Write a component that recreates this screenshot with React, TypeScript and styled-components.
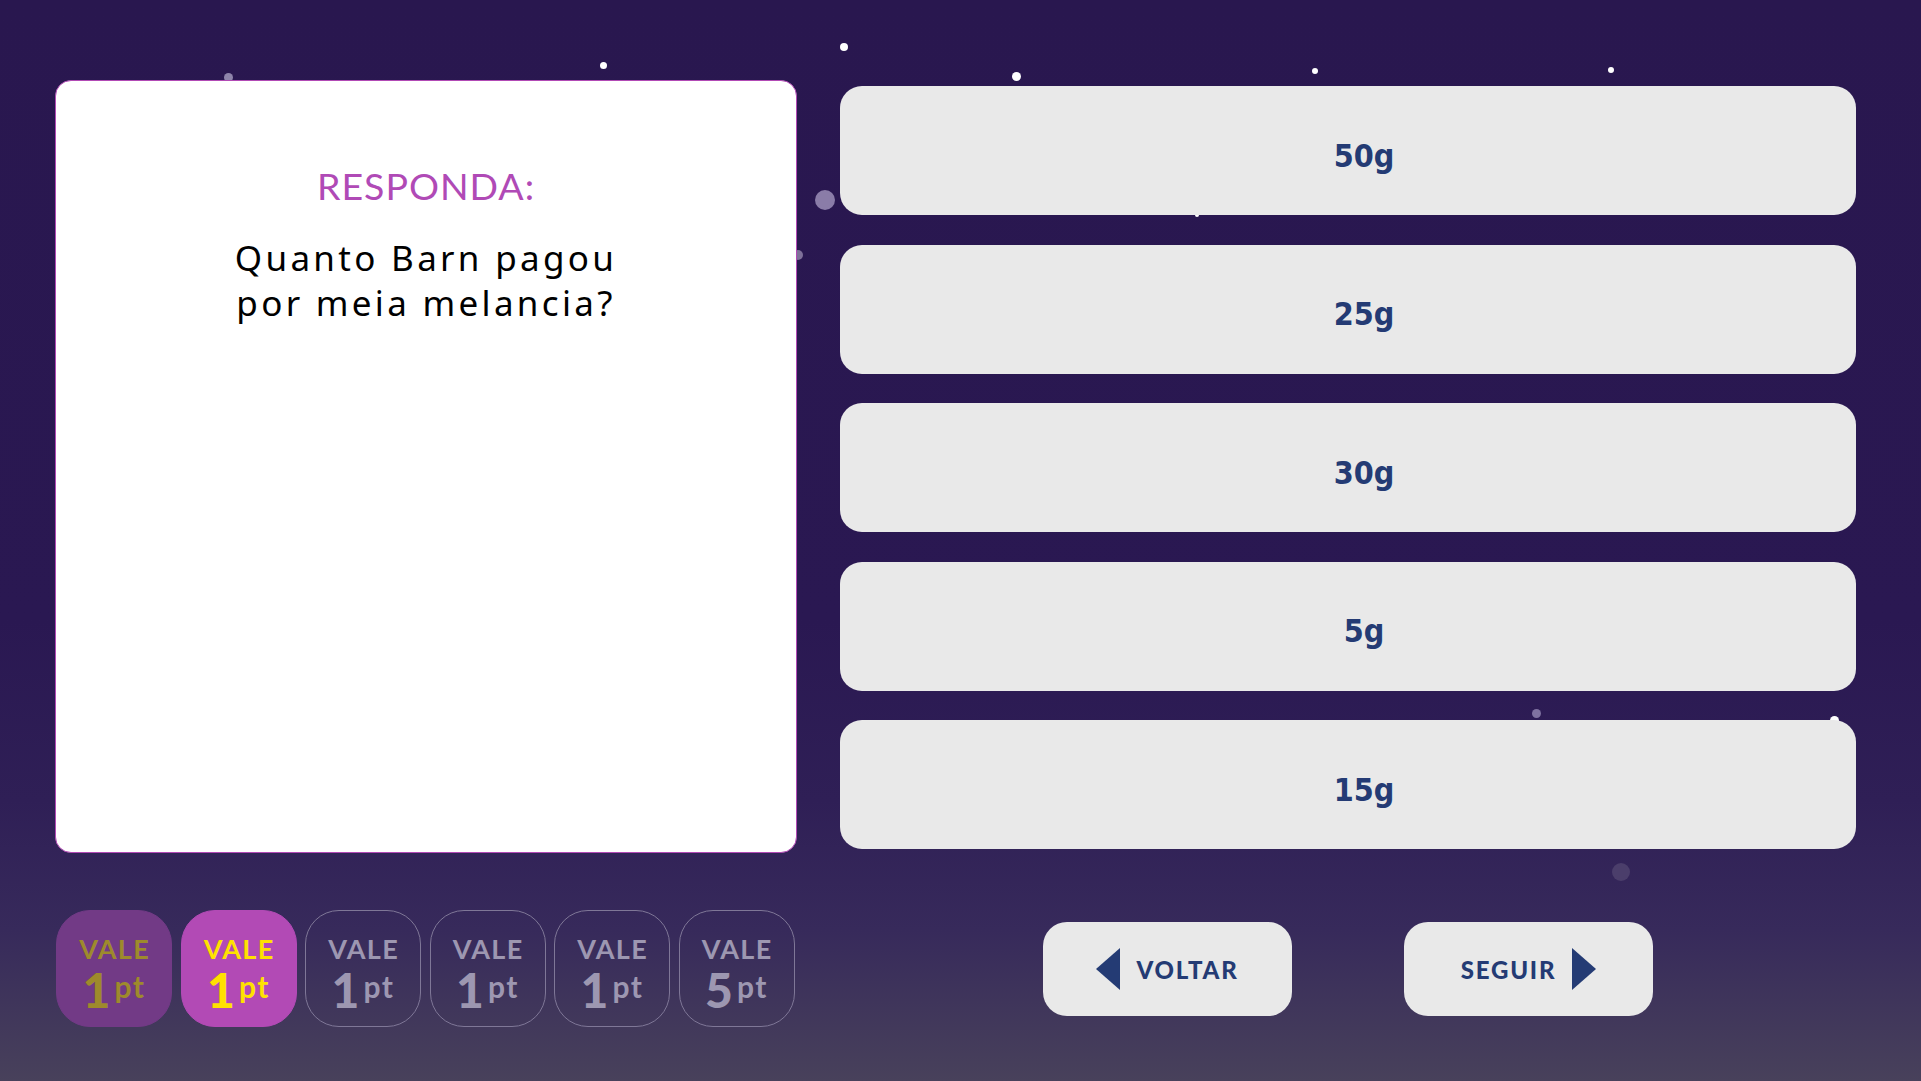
import React from "react";
import styled, { createGlobalStyle, css } from "styled-components";

const GlobalStyle = createGlobalStyle`
  html, body {
    margin: 0;
    padding: 0;
    width: 100%;
    height: 100%;
  }
  body {
    overflow: hidden;
    font-family: "Lato", "Noto Sans", sans-serif;
  }
  #root {
    width: 100%;
    height: 100%;
  }
  * { box-sizing: border-box; }
`;

const Stage = styled.main`
  position: relative;
  width: 100%;
  height: 1081px;
  overflow: hidden;
  background: linear-gradient(
    180deg,
    #29174f 0px,
    #2a1852 620px,
    #2f1f56 800px,
    #372a5b 930px,
    #48415b 1081px
  );
  display: grid;
  grid-template-columns: 742px 1016px;
  grid-template-rows: 773px 117px;
  column-gap: 43px;
  row-gap: 57px;
  padding: 80px 65px 0 55px;
`;

const Star = styled.span<{ $x: number; $y: number; $size: number; $color: string }>`
  position: absolute;
  z-index: 0;
  left: ${(p) => p.$x - p.$size / 2}px;
  top: ${(p) => p.$y - p.$size / 2}px;
  width: ${(p) => p.$size}px;
  height: ${(p) => p.$size}px;
  border-radius: 50%;
  background: ${(p) => p.$color};
`;

const QuestionCard = styled.section`
  position: relative;
  z-index: 1;
  background: #ffffff;
  border: 1px solid #b24ab5;
  border-radius: 16px;
  padding-top: 82px;
  text-align: center;
`;

const Prompt = styled.h2`
  margin: 0;
  font-family: "Lato", sans-serif;
  font-weight: 400;
  font-size: 37.5px;
  line-height: 45px;
  letter-spacing: 1px;
  color: #b04ab6;
`;

const Question = styled.p`
  margin: 27px 0 0;
  font-family: "Noto Sans", "Lato", sans-serif;
  font-weight: 400;
  font-size: 35px;
  line-height: 45px;
  letter-spacing: 3.3px;
  color: #000000;
`;

const AnswerList = styled.div`
  position: relative;
  z-index: 1;
  display: flex;
  flex-direction: column;
  gap: 29.5px;
  padding-top: 6px;
`;

const AnswerButton = styled.button`
  display: flex;
  align-items: center;
  justify-content: center;
  height: 129px;
  width: 100%;
  border: none;
  border-radius: 22px;
  background: #e9e9e9;
  padding: 10px 0 0 32px;
  font-family: "DejaVu Sans Condensed", "DejaVu Sans", sans-serif;
  font-stretch: condensed;
  font-weight: 700;
  font-size: 32px;
  color: #243b74;
  cursor: pointer;
`;

const BadgeRow = styled.div`
  position: relative;
  z-index: 1;
  display: flex;
  gap: 8.5px;
  padding-left: 1px;
`;

type BadgeKind = "used" | "active" | "idle";

const badgeKinds = {
  used: css`
    background: #723a86;
    border-color: #723a86;
    color: #9e8a2c;
  `,
  active: css`
    background: #b24ab5;
    border-color: #b24ab5;
    color: #ffe100;
  `,
  idle: css`
    background: transparent;
    border-color: #7f7797;
    color: #9d97b1;
  `,
};

const Badge = styled.div<{ $kind: BadgeKind }>`
  width: 116px;
  height: 117px;
  border-radius: 34px;
  border: 1px solid;
  display: flex;
  flex-direction: column;
  align-items: center;
  padding-top: 25px;
  font-family: "Lato", sans-serif;
  ${(p) => badgeKinds[p.$kind]}
`;

const BadgeLabel = styled.span`
  font-weight: 700;
  font-size: 27px;
  line-height: 26px;
  letter-spacing: 1.3px;
  padding-left: 1.3px;
`;

const BadgeValue = styled.span`
  margin-top: 5px;
  font-weight: 900;
  font-size: 48px;
  line-height: 38px;
  white-space: nowrap;
`;

const BadgeUnit = styled.span`
  font-weight: 700;
  font-size: 30px;
  letter-spacing: 1.5px;
  vertical-align: 10px;
  margin-left: 4px;
`;

const NavRow = styled.nav`
  position: relative;
  z-index: 1;
  display: flex;
  justify-content: center;
  align-items: center;
  gap: 112px;
`;

const NavButton = styled.button`
  width: 249px;
  height: 94px;
  border: none;
  border-radius: 24px;
  background: #e9e9e9;
  display: flex;
  align-items: center;
  justify-content: center;
  gap: 16px;
  font-family: "Lato", sans-serif;
  font-weight: 900;
  font-size: 24px;
  letter-spacing: 1.8px;
  color: #243b74;
  cursor: pointer;
  svg {
    display: block;
    flex: none;
  }
`;

const NavLabel = styled.span`
  line-height: 1;
  padding-top: 2px;
`;

const stars = [
  { x: 228, y: 77, s: 9, c: "#8e84aa" },
  { x: 603, y: 65, s: 7, c: "#ffffff" },
  { x: 844, y: 47, s: 8, c: "#ffffff" },
  { x: 1016, y: 76, s: 9, c: "#ffffff" },
  { x: 1315, y: 71, s: 6, c: "#ffffff" },
  { x: 1611, y: 70, s: 6, c: "#ffffff" },
  { x: 825, y: 200, s: 20, c: "#8a7ca8" },
  { x: 798, y: 255, s: 10, c: "#7e7099" },
  { x: 1197, y: 215, s: 4, c: "#ffffff" },
  { x: 1536, y: 713, s: 9, c: "#7f72a0" },
  { x: 1834, y: 720, s: 9, c: "#ffffff" },
  { x: 1621, y: 872, s: 18, c: "#4b3e6b" },
];

const answers = ["50g", "25g", "30g", "5g", "15g"];

const badges: { kind: BadgeKind; value: string }[] = [
  { kind: "used", value: "1" },
  { kind: "active", value: "1" },
  { kind: "idle", value: "1" },
  { kind: "idle", value: "1" },
  { kind: "idle", value: "1" },
  { kind: "idle", value: "5" },
];

const LeftArrow = () => (
  <svg width="24" height="42" viewBox="0 0 24 42">
    <polygon points="24,0 24,42 0,21" fill="#243b74" />
  </svg>
);

const RightArrow = () => (
  <svg width="24" height="42" viewBox="0 0 24 42">
    <polygon points="0,0 0,42 24,21" fill="#243b74" />
  </svg>
);

export default function App() {
  return (
    <>
      <GlobalStyle />
      <Stage>
        {stars.map((st, i) => (
          <Star key={i} $x={st.x} $y={st.y} $size={st.s} $color={st.c} />
        ))}
        <QuestionCard>
          <Prompt>RESPONDA:</Prompt>
          <Question>
            Quanto Barn pagou
            <br />
            por meia melancia?
          </Question>
        </QuestionCard>
        <AnswerList>
          {answers.map((a) => (
            <AnswerButton key={a}>{a}</AnswerButton>
          ))}
        </AnswerList>
        <BadgeRow>
          {badges.map((b, i) => (
            <Badge key={i} $kind={b.kind}>
              <BadgeLabel>VALE</BadgeLabel>
              <BadgeValue>
                {b.value}
                <BadgeUnit>pt</BadgeUnit>
              </BadgeValue>
            </Badge>
          ))}
        </BadgeRow>
        <NavRow>
          <NavButton>
            <LeftArrow />
            <NavLabel>VOLTAR</NavLabel>
          </NavButton>
          <NavButton>
            <NavLabel>SEGUIR</NavLabel>
            <RightArrow />
          </NavButton>
        </NavRow>
      </Stage>
    </>
  );
}
